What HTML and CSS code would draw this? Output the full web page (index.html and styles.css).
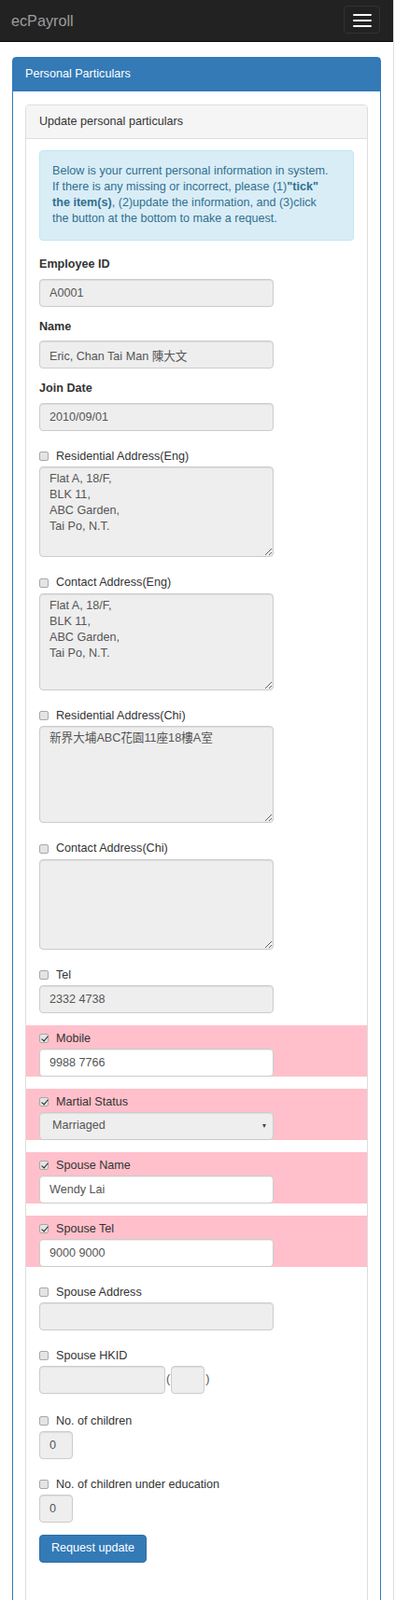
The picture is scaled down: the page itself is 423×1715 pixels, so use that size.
FILE: index.html
```html
<!DOCTYPE html>
<html lang="en">
<head>
    <meta charset="UTF-8">
    <meta name="viewport" content="width=device-width, initial-scale=1.0">
    <title>ecPayroll - Personal Particulars</title>
    <link rel="stylesheet" href="styles.css">
</head>
<body>
<div class="page">
    <nav class="navbar">
        <a class="brand" href="#">ecPayroll</a>
        <button class="navbar-toggle" type="button">
            <span class="bar"></span>
            <span class="bar"></span>
            <span class="bar"></span>
        </button>
    </nav>

    <div class="panel panel-primary">
        <div class="panel-heading">Personal Particulars</div>
        <div class="panel-body">
            <div class="panel panel-default">
                <div class="panel-heading">Update personal particulars</div>
                <div class="panel-body">
                    <div class="alert">
                        Below is your current personal information in system. If there is any missing or incorrect, please (1)<b>"tick" the item(s)</b>, (2)update the information, and (3)click the button at the bottom to make a request.
                    </div>

                    <form>
                        <div class="field">
                            <label>Employee ID</label>
                            <input class="form-control" type="text" value="A0001" disabled>
                        </div>
                        <div class="field">
                            <label>Name</label>
                            <input class="form-control" type="text" value="Eric, Chan Tai Man 陳大文" disabled>
                        </div>
                        <div class="field">
                            <label>Join Date</label>
                            <input class="form-control" type="text" value="2010/09/01" disabled>
                        </div>

                        <div class="field check">
                            <label class="check-label"><input type="checkbox">Residential Address(Eng)</label>
                            <textarea class="form-control ta-97" disabled>Flat A, 18/F,
BLK 11,
ABC Garden,
Tai Po, N.T.</textarea>
                        </div>
                        <div class="field check">
                            <label class="check-label"><input type="checkbox">Contact Address(Eng)</label>
                            <textarea class="form-control ta-104" disabled>Flat A, 18/F,
BLK 11,
ABC Garden,
Tai Po, N.T.</textarea>
                        </div>
                        <div class="field check">
                            <label class="check-label"><input type="checkbox">Residential Address(Chi)</label>
                            <textarea class="form-control ta-104" disabled>新界大埔ABC花園11座18樓A室</textarea>
                        </div>
                        <div class="field check">
                            <label class="check-label"><input type="checkbox">Contact Address(Chi)</label>
                            <textarea class="form-control ta-97" disabled></textarea>
                        </div>
                        <div class="field check">
                            <label class="check-label"><input type="checkbox">Tel</label>
                            <input class="form-control" type="text" value="2332 4738" disabled>
                        </div>

                        <div class="field check changed">
                            <label class="check-label"><input type="checkbox" checked>Mobile</label>
                            <input class="form-control" type="text" value="9988 7766">
                        </div>
                        <div class="field check changed">
                            <label class="check-label"><input type="checkbox" checked>Martial Status</label>
                            <span class="select-wrap">
                                <select class="form-control" disabled>
                                    <option>Single</option>
                                    <option selected>Marriaged</option>
                                </select>
                            </span>
                        </div>
                        <div class="field check changed">
                            <label class="check-label"><input type="checkbox" checked>Spouse Name</label>
                            <input class="form-control" type="text" value="Wendy Lai">
                        </div>
                        <div class="field check changed">
                            <label class="check-label"><input type="checkbox" checked>Spouse Tel</label>
                            <input class="form-control" type="text" value="9000 9000">
                        </div>

                        <div class="field check">
                            <label class="check-label"><input type="checkbox">Spouse Address</label>
                            <input class="form-control" type="text" value="" disabled>
                        </div>
                        <div class="field check hkid-field">
                            <label class="check-label"><input type="checkbox">Spouse HKID</label>
                            <div class="hkid">
                                <input class="form-control hkid-main" type="text" disabled>
                                <span>(</span>
                                <input class="form-control hkid-digit" type="text" disabled>
                                <span>)</span>
                            </div>
                        </div>
                        <div class="field check">
                            <label class="check-label"><input type="checkbox">No. of children</label>
                            <input class="form-control num" type="text" value="0" disabled>
                        </div>
                        <div class="field check">
                            <label class="check-label"><input type="checkbox">No. of children under education</label>
                            <input class="form-control num" type="text" value="0" disabled>
                        </div>

                        <button class="btn-primary" type="submit">Request update</button>
                    </form>
                </div>
            </div>
        </div>
    </div>
</div>
</body>
</html>
```

FILE: styles.css
```css
* {
    box-sizing: border-box;
}
body {
    margin: 0;
    font-family: "Liberation Sans", Arial, "Noto Sans CJK TC", sans-serif;
    font-size: 12.6px;
    line-height: 17px;
    color: #333;
    background: #fff;
}
.page {
    width: 422px;
    border-right: 1px solid #ddd;
    min-height: 1715px;
}

/* navbar */
.navbar {
    display: flex;
    justify-content: space-between;
    align-items: flex-start;
    height: 45px;
    padding: 0 14px 0 12px;
    background: #222;
    border-bottom: 1px solid #080808;
}
.brand {
    font-size: 16.2px;
    line-height: 44px;
    color: #9d9d9d;
    text-decoration: none;
}
.navbar-toggle {
    display: flex;
    flex-direction: column;
    align-items: center;
    gap: 4px;
    width: 39px;
    height: 30px;
    margin-top: 6px;
    padding: 8px 0 0;
    background: transparent;
    border: 1px solid #333;
    border-radius: 4px;
}
.navbar-toggle .bar {
    display: block;
    width: 20px;
    height: 2px;
    border-radius: 1px;
    background: #fff;
}

/* panels */
.panel {
    background: #fff;
    border: 1px solid transparent;
    border-radius: 4px;
}
.panel-primary {
    margin: 16px 13px 0;
    border-color: #337ab7;
}
.panel-primary > .panel-heading {
    padding: 9px 13px 10px;
    background: #337ab7;
    color: #fff;
}
.panel-primary > .panel-body {
    padding: 14px 13px;
}
.panel-default {
    border-color: #ddd;
}
.panel-default > .panel-heading {
    padding: 9px 14px;
    background: #f5f5f5;
    border-bottom: 1px solid #ddd;
    border-radius: 3px 3px 0 0;
}
.panel-default > .panel-body {
    padding: 12px 14px 60px;
}

.alert {
    margin-bottom: 17px;
    padding: 13px 20px 14px 13px;
    background: #d9edf7;
    border: 1px solid #bce8f1;
    border-radius: 4px;
    color: #31708f;
}

/* form */
.field {
    margin-bottom: 13px;
}
.field > label {
    display: block;
    margin-bottom: 6.5px;
    font-weight: bold;
}
.field.check {
    padding-top: 6px;
}
.field.check > label {
    margin-bottom: 2.5px;
}
.field.hkid-field {
    margin-bottom: 15px;
}
.field.changed {
    margin-left: -14px;
    margin-right: -14px;
    padding-left: 14px;
    padding-right: 14px;
    background: pink;
}
.check-label {
    display: flex !important;
    align-items: center;
    font-weight: normal !important;
}
.check-label input[type="checkbox"] {
    appearance: none;
    -webkit-appearance: none;
    position: relative;
    width: 10px;
    height: 10px;
    margin: 0 8px 0 0;
    background: #e4e4e4;
    border: 1px solid #a8a8a8;
    border-radius: 2px;
}
.check-label input[type="checkbox"]:checked::after {
    content: "";
    position: absolute;
    left: 2.5px;
    top: 0;
    width: 3px;
    height: 6px;
    border: solid #222;
    border-width: 0 1.5px 1.5px 0;
    transform: rotate(40deg);
}

.form-control {
    display: block;
    width: 251px;
    height: 30px;
    padding: 0 10px;
    font: inherit;
    color: #555;
    background: #fff;
    border: 1px solid #ccc;
    border-radius: 4px;
    box-shadow: inset 0 1px 1px rgba(0, 0, 0, .075);
}
.field.check .form-control {
    height: 29.5px;
}
.form-control:disabled {
    background: #eee;
    color: #555;
    opacity: 1;
}
textarea.form-control {
    padding: 4px 10px;
    line-height: 17px;
    resize: vertical;
}
.field.check textarea.ta-97 {
    height: 97px;
}
.field.check textarea.ta-104 {
    height: 104px;
}

.select-wrap {
    position: relative;
    display: block;
    width: 251px;
}
.select-wrap select {
    appearance: none;
    -webkit-appearance: none;
    padding-left: 13px;
}
.select-wrap::after {
    content: "";
    position: absolute;
    right: 8px;
    top: 13px;
    border-left: 2.5px solid transparent;
    border-right: 2.5px solid transparent;
    border-top: 4px solid #444;
}

.hkid {
    display: flex;
    align-items: center;
    gap: 1px;
    color: #555;
}
.hkid .hkid-main {
    width: 135px;
}
.hkid .hkid-digit {
    width: 36px;
}
.form-control.num {
    width: 36px;
}

.btn-primary {
    display: block;
    margin-top: 4px;
    height: 30px;
    padding: 0 12px;
    font: inherit;
    color: #fff;
    background: #337ab7;
    border: 1px solid #2e6da4;
    border-radius: 4px;
    cursor: pointer;
}
.btn-primary:hover {
    background: #286090;
}
```
